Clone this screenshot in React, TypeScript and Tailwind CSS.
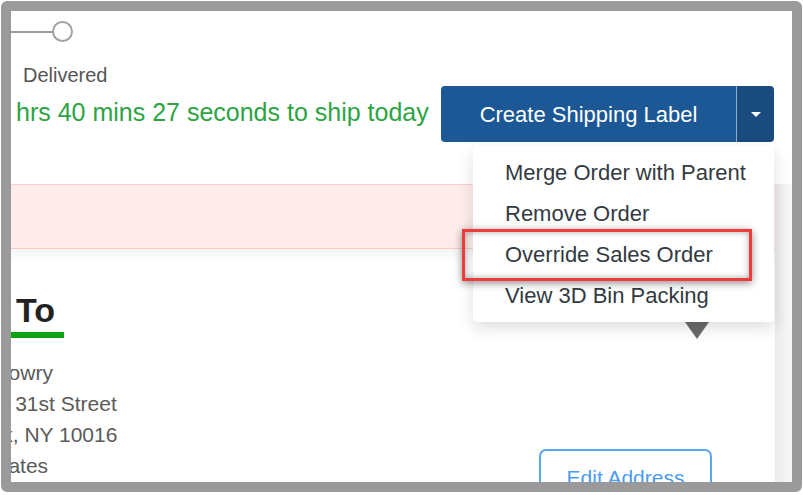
export default function App() {
  const items = ["Merge Order with Parent", "Remove Order", "Override Sales Order", "View 3D Bin Packing"];
  return (
    <div className="w-[803px] h-[495px] bg-white font-['Liberation_Sans',Arial,sans-serif] pt-[1px] pl-[1px]">
      <div className="w-[801px] h-[491px] border-[10px] border-[#9a9a9a] rounded-[6px] overflow-hidden bg-white">
        <div className="relative w-full h-full overflow-hidden flex flex-col">
          {/* progress step */}
          <div className="flex items-center mt-[10px] h-[21px] shrink-0">
            <div className="w-[42px] h-[2px] bg-[#9c9c9c]" />
            <div className="w-[21px] h-[21px] rounded-full border-2 border-[#a2a2a2] bg-white -ml-[1px]" />
          </div>
          <div className="mt-[21px] ml-[12px] text-[20px] leading-[24px] text-[#555555] shrink-0">Delivered</div>
          {/* ship row */}
          <div className="flex items-start h-[56px] mt-[-1px] shrink-0">
            <div className="ml-[5px] mt-[11px] text-[25px] leading-[30px] text-[#2ca444] whitespace-nowrap">
              hrs 40 mins 27 seconds to ship today
            </div>
            <div className="relative z-10 ml-auto mr-[18px] flex h-[56px]">
              <div className="w-[295px] h-[56px] bg-[#1c5896] rounded-l-[4px] flex items-center justify-center text-white text-[22px]">
                Create Shipping Label
              </div>
              <div className="w-[38px] h-[56px] bg-[#194b7f] rounded-r-[4px] border-l border-[#8fabc8] flex items-center justify-center">
                <div className="w-0 h-0 border-l-[5.5px] border-r-[5.5px] border-t-[5px] border-l-transparent border-r-transparent border-t-white" />
              </div>
              {/* dropdown menu */}
              <div className="absolute top-[60px] right-0 w-[301px] py-[6px] bg-white rounded-[4px] shadow-[0_6px_16px_rgba(0,0,0,0.13)]">
                {items.map((t) => (
                  <div key={t} className="h-[41px] pl-[32px] flex items-center text-[22px] text-[#333a42] whitespace-nowrap">
                    {t}
                  </div>
                ))}
                <div className="absolute left-[-11px] top-[83px] w-[290px] h-[52px] border-[3px] border-[#ef3b3b] shadow-[0_2px_8px_rgba(0,0,0,0.45),inset_0_0_6px_rgba(0,0,0,0.35)]" />
              </div>
            </div>
          </div>
          {/* card */}
          <div className="mt-[42px] flex flex-1 min-h-0">
            <div className="w-[764px] flex flex-col shrink-0">
              <div className="h-[65px] bg-[#fdecea] border-y border-[#f6cfcb] shrink-0" />
              <div className="h-[13px] bg-linear-to-b from-[#f4f4f4] to-white shrink-0" />
              <div className="flex flex-1 bg-white min-h-0">
                <div className="flex flex-col">
                  <div className="ml-[-78px] mt-[28px] text-[34px] leading-[40px] font-bold text-[#222222] whitespace-nowrap">
                    Ship To
                  </div>
                  <div className="mt-[2px] w-[53px] h-[6px] bg-[#10a310]" />
                  <div className="mt-[19px] text-[21px] leading-[31px] text-[#5a5a5a] whitespace-nowrap">
                    <div className="ml-[-69px]">Ryan Lowry</div>
                    <div className="ml-[-39px]">7 W 31st Street</div>
                    <div className="ml-[-87px]">New York, NY 10016</div>
                    <div className="ml-[-89px]">United States</div>
                  </div>
                </div>
                <div className="ml-auto mr-[63px] flex flex-col items-end">
                  <div className="mt-[60px] mr-[3px] w-0 h-0 border-l-[12.5px] border-r-[12.5px] border-t-[17px] border-l-transparent border-r-transparent border-t-[#6b6b6b]" />
                  <div className="mt-[110px] w-[173px] h-[58px] shrink-0 border-2 border-[#5aa8f0] rounded-[7px] flex items-center justify-center text-[21px] text-[#4a9cee]">
                    Edit Address
                  </div>
                </div>
              </div>
            </div>
            <div className="w-[17px] bg-linear-to-r from-[#ebebeb] to-[#f7f7f7]" />
          </div>
        </div>
      </div>
    </div>
  );
}
